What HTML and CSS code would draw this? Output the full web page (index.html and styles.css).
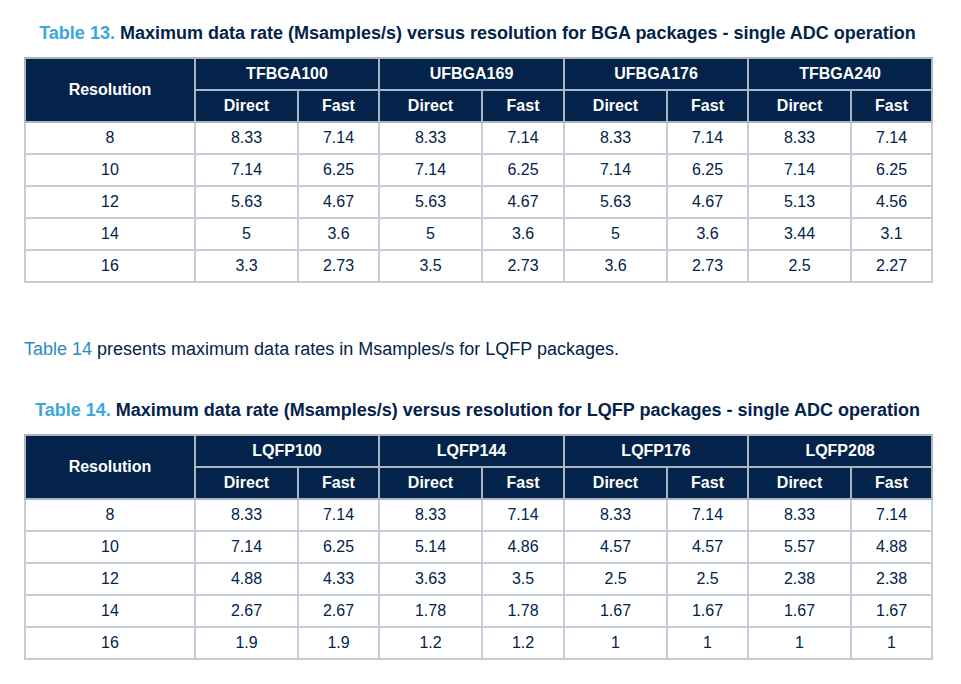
FILE: index.html
```html
<!DOCTYPE html>
<html>
<head>
<meta charset="utf-8">
<link rel="stylesheet" href="styles.css">
</head>
<body>
<div class="page">
  <section class="block first">
    <h2 class="caption"><span class="num">Table 13.</span> Maximum data rate (Msamples/s) versus resolution for BGA packages - single ADC operation</h2>
    <table class="data">
      <colgroup>
        <col class="c-res"><col class="c-d"><col class="c-f"><col class="c-d"><col class="c-f2"><col class="c-d"><col class="c-f"><col class="c-d"><col class="c-f">
      </colgroup>
      <thead>
        <tr><th rowspan="2">Resolution</th><th colspan="2">TFBGA100</th><th colspan="2">UFBGA169</th><th colspan="2">UFBGA176</th><th colspan="2">TFBGA240</th></tr>
        <tr><th>Direct</th><th>Fast</th><th>Direct</th><th>Fast</th><th>Direct</th><th>Fast</th><th>Direct</th><th>Fast</th></tr>
      </thead>
      <tbody>
        <tr><td>8</td><td>8.33</td><td>7.14</td><td>8.33</td><td>7.14</td><td>8.33</td><td>7.14</td><td>8.33</td><td>7.14</td></tr>
        <tr><td>10</td><td>7.14</td><td>6.25</td><td>7.14</td><td>6.25</td><td>7.14</td><td>6.25</td><td>7.14</td><td>6.25</td></tr>
        <tr><td>12</td><td>5.63</td><td>4.67</td><td>5.63</td><td>4.67</td><td>5.63</td><td>4.67</td><td>5.13</td><td>4.56</td></tr>
        <tr><td>14</td><td>5</td><td>3.6</td><td>5</td><td>3.6</td><td>5</td><td>3.6</td><td>3.44</td><td>3.1</td></tr>
        <tr><td>16</td><td>3.3</td><td>2.73</td><td>3.5</td><td>2.73</td><td>3.6</td><td>2.73</td><td>2.5</td><td>2.27</td></tr>
      </tbody>
    </table>
  </section>

  <p class="text"><a class="ref">Table 14</a> presents maximum data rates in Msamples/s for LQFP packages.</p>

  <section class="block">
    <h2 class="caption"><span class="num">Table 14.</span> Maximum data rate (Msamples/s) versus resolution for LQFP packages - single ADC operation</h2>
    <table class="data">
      <colgroup>
        <col class="c-res"><col class="c-d"><col class="c-f"><col class="c-d"><col class="c-f2"><col class="c-d"><col class="c-f"><col class="c-d"><col class="c-f">
      </colgroup>
      <thead>
        <tr><th rowspan="2">Resolution</th><th colspan="2">LQFP100</th><th colspan="2">LQFP144</th><th colspan="2">LQFP176</th><th colspan="2">LQFP208</th></tr>
        <tr><th>Direct</th><th>Fast</th><th>Direct</th><th>Fast</th><th>Direct</th><th>Fast</th><th>Direct</th><th>Fast</th></tr>
      </thead>
      <tbody>
        <tr><td>8</td><td>8.33</td><td>7.14</td><td>8.33</td><td>7.14</td><td>8.33</td><td>7.14</td><td>8.33</td><td>7.14</td></tr>
        <tr><td>10</td><td>7.14</td><td>6.25</td><td>5.14</td><td>4.86</td><td>4.57</td><td>4.57</td><td>5.57</td><td>4.88</td></tr>
        <tr><td>12</td><td>4.88</td><td>4.33</td><td>3.63</td><td>3.5</td><td>2.5</td><td>2.5</td><td>2.38</td><td>2.38</td></tr>
        <tr><td>14</td><td>2.67</td><td>2.67</td><td>1.78</td><td>1.78</td><td>1.67</td><td>1.67</td><td>1.67</td><td>1.67</td></tr>
        <tr><td>16</td><td>1.9</td><td>1.9</td><td>1.2</td><td>1.2</td><td>1</td><td>1</td><td>1</td><td>1</td></tr>
      </tbody>
    </table>
  </section>
</div>
</body>
</html>
```

FILE: styles.css
```css
html, body {
  margin: 0;
  padding: 0;
  background: #ffffff;
}

body {
  font-family: "Liberation Sans", Arial, sans-serif;
  color: #03234b;
}

.page {
  width: 907px;
  margin-left: 24px;
  padding-top: 22px;
}

.block {
  margin: 0;
}

.caption {
  margin: 0 0 13px 0;
  font-size: 18px;
  line-height: 22px;
  font-weight: bold;
  text-align: center;
  color: #03234b;
  white-space: nowrap;
}

.caption .num {
  color: #3aa8dc;
}

.text {
  margin: 56px 0 40px 0;
  font-size: 18px;
  line-height: 20px;
}

.ref {
  color: #2a8cc4;
  text-decoration: none;
}

.data {
  width: 907px;
  table-layout: fixed;
  border-collapse: collapse;
  font-size: 16px;
}

.c-res { width: 170px; }
.c-d { width: 103px; }
.c-f { width: 81px; }
.c-f2 { width: 82px; }

.data th,
.data td {
  border: 2px solid #c4ccd5;
  text-align: center;
  padding: 0;
  height: 30px;
}

.data th {
  background: #03234b;
  color: #ffffff;
  font-weight: bold;
  border-color: #aab6c4;
}

.data td {
  color: #03234b;
}
```
